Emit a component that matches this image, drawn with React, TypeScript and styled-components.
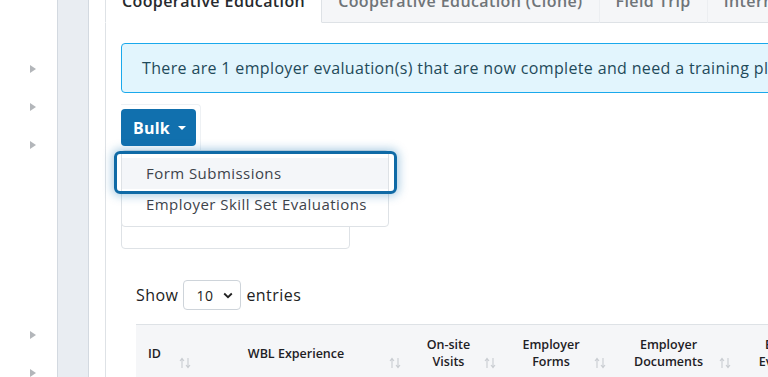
import React from 'react';
import styled, { createGlobalStyle } from 'styled-components';

const GlobalStyle = createGlobalStyle`
  html, body {
    margin: 0;
    padding: 0;
    background: #ffffff;
    overflow: hidden;
  }
  body {
    font-family: "Open Sans", "Liberation Sans", sans-serif;
    letter-spacing: 0.45px;
    color: #222;
  }
  * { box-sizing: border-box; }
`;

const sidebarRows = [
  { label: 'Student Management', arrow: false, active: true },
  { label: 'Reports', arrow: true },
  { label: 'Settings', arrow: true },
  { label: 'Users', arrow: true },
  { label: '', arrow: false },
  { label: '', arrow: false },
  { label: '', arrow: false },
  { label: '', arrow: false },
  { label: 'Tools', arrow: true },
  { label: 'Help', arrow: true },
];

const tabs = ['Cooperative Education', 'Cooperative Education (Clone)', 'Field Trip', 'Internship'];

const columns = [
  { title: 'ID', width: 64, align: 'left' },
  { title: 'WBL Experience', width: 210, align: 'center' },
  { title: 'On-site\nVisits', width: 95, align: 'center' },
  { title: 'Employer\nForms', width: 110, align: 'center' },
  { title: 'Employer\nDocuments', width: 125, align: 'center' },
  { title: 'Employer\nEvaluations', width: 125, align: 'center' },
];

const SortIcon = () => (
  <SortSvg viewBox="0 0 12 12" width="12" height="12">
    <path d="M3 11V2M1 4l2-2.5L5 4" fill="none" stroke="currentColor" strokeWidth="1.1" />
    <path d="M9 1v9M7 8l2 2.5L11 8" fill="none" stroke="currentColor" strokeWidth="1.1" />
  </SortSvg>
);

const App = () => {
  return (
    <Page>
      <GlobalStyle />
      <Sidebar>
        {sidebarRows.map((row, i) => (
          <SideRow key={i}>
            {row.active && <SideLabel>{row.label}</SideLabel>}
            {row.arrow && <SideArrow />}
          </SideRow>
        ))}
      </Sidebar>
      <Gutter />
      <Main>
        <TabBar>
          {tabs.map((t, i) => (
            <Tab key={t} $active={i === 0}>{t}</Tab>
          ))}
        </TabBar>
        <Pane>
          <Alert>
            There are 1 employer evaluation(s) that are now complete and need a training plan review.
          </Alert>

          <BulkGroup>
            <BulkButton>
              Bulk <Caret />
            </BulkButton>
            <Menu>
              <MenuItem $focused>Form Submissions</MenuItem>
              <MenuItem>Employer Skill Set Evaluations</MenuItem>
            </Menu>
          </BulkGroup>

          <FilterBox />

          <TableSection>
            <LengthRow>
              Show
              <LengthSelect>
                <span>10</span>
                <svg width="10" height="7" viewBox="0 0 10 7">
                  <path d="M1.2 1.5L5 5.2l3.8-3.7" fill="none" stroke="#222" strokeWidth="1.8" />
                </svg>
              </LengthSelect>
              entries
            </LengthRow>

            <HeaderRow>
              {columns.map((c) => (
                <HeadCell key={c.title} $width={c.width} $align={c.align}>
                  {c.title}
                  <SortIcon />
                </HeadCell>
              ))}
            </HeaderRow>
          </TableSection>
        </Pane>
      </Main>
    </Page>
  );
};

export default App;


const Page = styled.div`
  display: flex;
  height: 100vh;
  overflow: hidden;
`;

const Sidebar = styled.div`
  width: 57px;
  flex-shrink: 0;
  background: #ffffff;
  overflow: hidden;
  padding-top: 12px;
`;

const SideRow = styled.div`
  position: relative;
  height: 38px;
  display: flex;
  align-items: center;
`;

const SideLabel = styled.span`
  white-space: nowrap;
  font-size: 15px;
  color: #2a6db0;
  margin-left: -160px;
`;

const SideArrow = styled.span`
  position: absolute;
  left: 30px;
  top: 15px;
  width: 0;
  height: 0;
  border-top: 4px solid transparent;
  border-bottom: 4px solid transparent;
  border-left: 6px solid #b3b6ba;
`;

const Gutter = styled.div`
  width: 32px;
  flex-shrink: 0;
  background: #e9edf2;
  border-left: 1px solid #d3d9e0;
  border-right: 1px solid #d3d9e0;
`;

const Main = styled.div`
  flex: 1;
  min-width: 0;
  overflow: hidden;
  padding-left: 16px;
`;

const TabBar = styled.div`
  display: flex;
  margin-top: -20px;
  white-space: nowrap;
  width: 900px;
`;

const Tab = styled.div<{ $active?: boolean }>`
  padding: 9px 16px;
  line-height: 24px;
  font-size: 16px;
  font-weight: 600;
  letter-spacing: 0.4px;
  color: ${(p) => (p.$active ? '#262a2e' : '#6f7478')};
  background: ${(p) => (p.$active ? '#ffffff' : '#f5f6f8')};
  border: 1px solid #dee2e6;
  border-top: none;
  border-left: ${(p) => (p.$active ? '1px solid #dee2e6' : 'none')};
  border-bottom: ${(p) => (p.$active ? '1px solid #ffffff' : '1px solid #dee2e6')};
  border-right: 1px solid ${(p) => (p.$active ? '#dee2e6' : '#eceef1')};
`;

const Pane = styled.div`
  width: 900px;
  margin-top: -1px;
  border-left: 1px solid #dee2e6;
  border-top: 1px solid #dee2e6;
  padding: 20px 0 0 15px;
`;

const Alert = styled.div`
  background: #e2f5fd;
  border: 1px solid #1aa9ec;
  border-radius: 4px;
  padding: 12px 20px;
  line-height: 24px;
  font-size: 16px;
  letter-spacing: 0.35px;
  color: #1f4a5a;
  white-space: nowrap;
`;

const BulkGroup = styled.div`
  position: relative;
  display: inline-block;
  margin-top: 11px;
  padding: 4px 4px 4px 0;
  border: 1px solid #eef1f4;
  border-left: none;
  border-bottom: none;
  border-radius: 0 4px 0 0;
`;

const BulkButton = styled.div`
  display: flex;
  align-items: center;
  gap: 8px;
  width: 75px;
  height: 37px;
  padding: 0 12px;
  background: #1170ae;
  border-radius: 4px;
  color: #ffffff;
  font-size: 16px;
  font-weight: 700;
  letter-spacing: 0.2px;
`;

const Caret = styled.span`
  width: 0;
  height: 0;
  border-left: 4px solid transparent;
  border-right: 4px solid transparent;
  border-top: 4px solid #ffffff;
`;

const Menu = styled.div`
  position: absolute;
  top: 45px;
  left: 0;
  z-index: 2;
  width: 268px;
  padding: 7px 0 6px;
  background: #ffffff;
  border: 1px solid #dee2e6;
  border-radius: 4px;
`;

const MenuItem = styled.div<{ $focused?: boolean }>`
  position: relative;
  padding: 4px 24px;
  line-height: 23px;
  font-size: 15px;
  color: #3d434b;
  white-space: nowrap;
  background: ${(p) => (p.$focused ? '#f4f6f9' : 'transparent')};

  ${(p) =>
    p.$focused &&
    `
    &::after {
      content: '';
      position: absolute;
      top: -7px;
      bottom: -5px;
      left: -8px;
      right: -9px;
      border: 3px solid #0f6aa6;
      border-radius: 6px;
      box-shadow: 0 0 10px 2px rgba(17, 112, 174, 0.35);
    }
  `}
`;

const FilterBox = styled.div`
  width: 229px;
  height: 42px;
  margin-top: 57px;
  border: 1px solid #dee2e6;
  border-radius: 4px;
`;

const TableSection = styled.div`
  padding-left: 15px;
`;

const LengthRow = styled.div`
  display: flex;
  align-items: center;
  gap: 5px;
  margin-top: 31px;
  font-size: 16px;
  color: #222;
`;

const LengthSelect = styled.div`
  display: flex;
  align-items: center;
  justify-content: space-between;
  width: 58px;
  height: 30px;
  padding: 0 7px 0 12px;
  border: 1px solid #ced4da;
  border-radius: 4px;
  font-size: 14px;
`;

const HeaderRow = styled.div`
  display: flex;
  margin-top: 14px;
  background: #f5f6f8;
  border-top: 1px solid #dee2e6;
`;

const HeadCell = styled.div<{ $width: number; $align: string }>`
  position: relative;
  width: ${(p) => p.$width}px;
  flex-shrink: 0;
  padding: 10px 30px 10px 12px;
  min-height: 56px;
  display: flex;
  align-items: center;
  justify-content: ${(p) => (p.$align === 'left' ? 'flex-start' : 'center')};
  text-align: ${(p) => p.$align};
  white-space: pre-line;
  font-size: 12.5px;
  line-height: 17px;
  font-weight: 600;
  letter-spacing: 0;
  color: #1e2125;
`;

const SortSvg = styled.svg`
  position: absolute;
  right: 9px;
  bottom: 12px;
  color: #c8ccd1;
`;
